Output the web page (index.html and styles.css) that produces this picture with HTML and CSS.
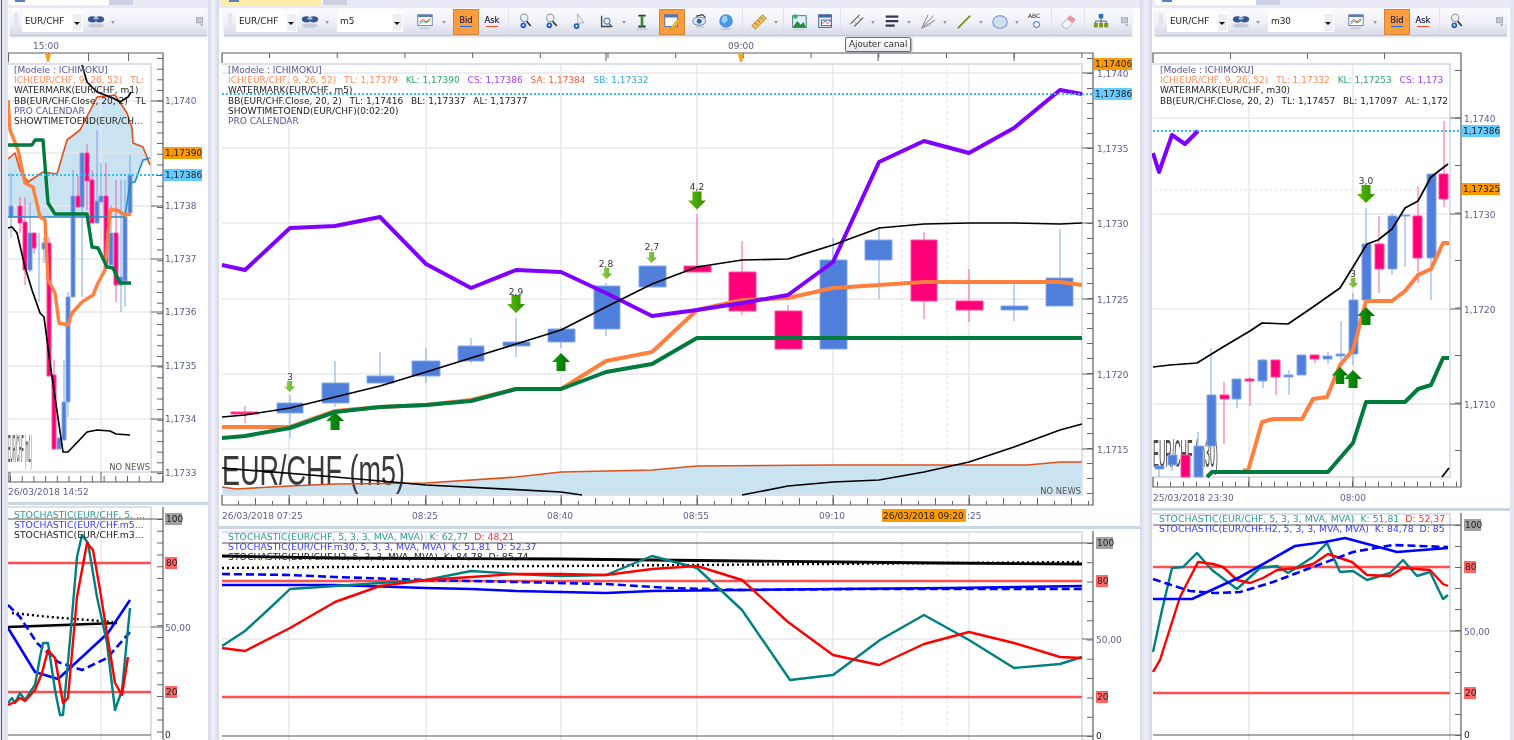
FILE: index.html
```html
<!DOCTYPE html>
<html lang="fr">
<head>
<meta charset="utf-8">
<title>EUR/CHF</title>
<link rel="stylesheet" href="styles.css">
</head>
<body>
<svg class="defs" width="0" height="0" aria-hidden="true">
  <defs>
    <linearGradient id="gUp" x1="0" x2="1"><stop offset="0" stop-color="#12a012"/><stop offset="1" stop-color="#006a00"/></linearGradient>
    <linearGradient id="gDown" x1="0" x2="1"><stop offset="0" stop-color="#5cc000"/><stop offset="1" stop-color="#2c8a00"/></linearGradient>
    <linearGradient id="gSm" x1="0" x2="1"><stop offset="0" stop-color="#a0d860"/><stop offset="1" stop-color="#5aa820"/></linearGradient>
    <symbol id="up" viewBox="0 0 18 18"><path d="M9 0L18 9H13.500V18H4.500V9H0Z" fill="url(#gUp)"/></symbol>
    <symbol id="down" viewBox="0 0 18 18"><path d="M9 18L18 9H13.500V0H4.500V9H0Z" fill="url(#gDown)"/></symbol>
    <symbol id="sdown" viewBox="0 0 11 11"><path d="M5.500 11L11 5.500H8V0H3V5.500H0Z" fill="url(#gSm)"/></symbol>
    <symbol id="i-glass" viewBox="0 0 20 18"><ellipse cx="6" cy="6" rx="5" ry="3.500" fill="#35568f"/><ellipse cx="14" cy="6" rx="5" ry="3.500" fill="#35568f"/><ellipse cx="10" cy="5" rx="3" ry="1.500" fill="#9ab4dc"/><ellipse cx="10" cy="13" rx="9" ry="2.500" fill="#c8ccd8"/></symbol>
    <symbol id="i-chart" viewBox="0 0 20 20"><rect x="2" y="2" width="16" height="12" fill="#fff" stroke="#5c7cb4"/><rect x="2" y="2" width="16" height="2.500" fill="#5c7cb4"/><path d="M4 10L8 7L11 10L16 6" fill="none" stroke="#d04040"/><path d="M4 12L8 9L11 11L16 8" fill="none" stroke="#30a040"/><path d="M4 17H16" stroke="#c8ccd8" stroke-width="2"/></symbol>
    <symbol id="i-mag" viewBox="0 0 20 22"><circle cx="9" cy="6" r="4.500" fill="#eef2fa" stroke="#9aa2b4" stroke-width="1.500"/><path d="M12 10L17 16" stroke="#333" stroke-width="2"/><circle cx="8" cy="15" r="3.500" fill="#2262c4"/><circle cx="8" cy="15" r="1.200" fill="#fff"/></symbol>
    <symbol id="i-cur" viewBox="0 0 20 22"><path d="M8 1L16 12H11L9 16Z" fill="#eef0f6" stroke="#9aa2b4"/><circle cx="7" cy="16" r="3.500" fill="#2262c4"/><circle cx="7" cy="16" r="1.200" fill="#fff"/></symbol>
    <symbol id="i-zoom" viewBox="0 0 20 20"><path d="M4 3V15H16" fill="none" stroke="#444" stroke-width="1.500"/><circle cx="10" cy="9" r="3.500" fill="#dde8f8" stroke="#405a90"/><path d="M12.500 12L15 15" stroke="#405a90" stroke-width="1.500"/></symbol>
    <symbol id="i-beam" viewBox="0 0 20 20"><path d="M6 3H14M6 15H14" stroke="#334" stroke-width="2"/><path d="M10 3V15" stroke="#3a8a30" stroke-width="3"/><path d="M4 18H16" stroke="#c8ccd8" stroke-width="2"/></symbol>
    <symbol id="i-note" viewBox="0 0 20 20"><rect x="2" y="2" width="14" height="13" fill="#fff" stroke="#4a6ab0"/><rect x="2" y="2" width="14" height="3" fill="#4a78c8"/><path d="M8 17L17 6L19 8L11 18Z" fill="#f8c020" stroke="#a06010" stroke-width=".5"/></symbol>
    <symbol id="i-eye" viewBox="0 0 20 22"><ellipse cx="9" cy="10" rx="8" ry="5" fill="#dfe8f6" stroke="#5a6a84"/><circle cx="9" cy="10" r="3" fill="#2a64b8"/><path d="M5 4L13 2L17 6" fill="none" stroke="#333" stroke-width="1.500"/><path d="M5 17H15" stroke="#c8ccd8" stroke-width="2"/></symbol>
    <symbol id="i-globe" viewBox="0 0 20 20"><circle cx="10" cy="9" r="7.500" fill="#4a96dc"/><path d="M6 4L11 3L12 8L8 12L5 9Z" fill="#9cd0f0"/><path d="M4 18H16" stroke="#c8ccd8" stroke-width="2"/></symbol>
    <symbol id="i-ruler" viewBox="0 0 20 20"><path d="M2 14L14 2L18 6L6 18Z" fill="#ecc060" stroke="#a88030"/><path d="M6 11L8 13M9 8L11 10M12 5L14 7" stroke="#806020"/></symbol>
    <symbol id="i-pic" viewBox="0 0 20 20"><rect x="3" y="3" width="15" height="13" fill="#dff0ff" stroke="#2a7a60"/><path d="M3 16L8 9L12 13L15 10L18 16Z" fill="#2a8a40"/><circle cx="6" cy="4" r="2.500" fill="#3cb050"/><path d="M4 18.500H16" stroke="#c8ccd8" stroke-width="1.500"/></symbol>
    <symbol id="i-win" viewBox="0 0 20 20"><rect x="3" y="2" width="14" height="14" fill="#e6eefa" stroke="#3a5a98"/><rect x="3" y="2" width="14" height="3" fill="#3a66b4"/><rect x="6" y="8" width="11" height="6" fill="#fff" stroke="#3a5a98"/><path d="M7 12L10 9L13 12L16 9" fill="none" stroke="#b04050"/></symbol>
    <symbol id="i-chan" viewBox="0 0 20 20"><path d="M4 12L14 2M8 15L18 5" stroke="#666" stroke-width="1.200"/><path d="M7 9L10 12M12 4L15 7" stroke="#999"/></symbol>
    <symbol id="i-lines" viewBox="0 0 20 20"><path d="M3 4H17" stroke="#33394a" stroke-width="2.500"/><path d="M3 9H17" stroke="#33394a" stroke-width="2.500"/><path d="M3 14H13" stroke="#33394a" stroke-width="2.500"/></symbol>
    <symbol id="i-fan" viewBox="0 0 20 20"><path d="M3 17L16 3M3 17L18 8M3 17L10 2" stroke="#777" fill="none"/><path d="M3 17L14 13" stroke="#bbb"/></symbol>
    <symbol id="i-line" viewBox="0 0 20 20"><path d="M3 17L17 3" stroke="#6a9a20" stroke-width="2"/></symbol>
    <symbol id="i-ell" viewBox="0 0 20 20"><ellipse cx="10" cy="10" rx="8" ry="7" fill="#cfe0f4" stroke="#90a8c8" stroke-width="1.500"/></symbol>
    <symbol id="i-erase" viewBox="0 0 20 20"><path d="M3 13L12 3L18 7L10 17H6Z" fill="#f4f4f6" stroke="#b0b0b8"/><path d="M12 3L18 7L15 11L9 7Z" fill="#f09098"/></symbol>
    <symbol id="i-org" viewBox="0 0 20 20"><rect x="7.500" y="1" width="5" height="5" fill="#2a70c0"/><path d="M10 6V9M4 11V9H16V11M10 9V11" stroke="#555" fill="none"/><rect x="2" y="11" width="4.500" height="5" fill="#7a9a20"/><rect x="7.800" y="11" width="4.500" height="5" fill="#7a9a20"/><rect x="13.500" y="11" width="4.500" height="5" fill="#7a9a20"/></symbol>
    <symbol id="i-more" viewBox="0 0 14 14"><rect x="3" y="2" width="7" height="6" fill="#c4c8d4" stroke="#a0a4b0"/><path d="M7 10L9 12L11 10Z" fill="#8a8e9a"/></symbol>
  </defs>
</svg>

<main class="desk">
  <div class="gutter gutter-first"></div>

  <!-- LEFT PANE -->
  <section class="pane pane-left">
    <div class="tabs"><span class="tab"></span><span class="tab tab-next"></span></div>
    <div class="toolbar">
      <span class="grip"></span>
      <span class="combo combo-pair">EUR/CHF<i class="drop"></i></span>
      <span class="tb"><svg class="ic"><use href="#i-glass"/></svg></span>
      <span class="ta"></span>
      <span class="spacer"></span>
      <span class="tb tb-more"><svg class="ic ic-s"><use href="#i-more"/></svg></span>
    </div>
    <div class="chart">
      <svg class="plot h-left-main" viewBox="8 36 200 466" width="200" height="466">
        <text class="ax" x="46" y="49" text-anchor="middle">15:00</text>
        <path class="cloud" d="M8 159L15 153L20 170L28 182L43 172L57 174L67 140L80 130L97 97L115 95L127 113L132 128L133 143L143 147L150 165L143 160L135 182L130 183L125 213V217H8Z"/>
        <path class="grid" d="M8 101H151M8 153H151M8 206H151M8 259H151M8 312H151M8 366H151M8 419H151M101 63V472"/>
        <path class="dot-grey" d="M80 153H151"/>
        <path class="plotbox" d="M8 64H151V472H8"/>
        <path class="wick-b" d="M11 173V238M39 233V302M44 237V263M30 202V272M68 292V417M64 360V440M82 153V297M97 130V213M101 163V202M111 205V265M121 180V312M125 180V307M130 155V213M73 170V297"/>
        <path class="wick-p" d="M20 197V233M25 197V285M34 233V254M49 237V376M54 360V449M78 176V207M87 144V210M92 170V223M106 163V263M116 180V302"/>
        <path class="body-b" d="M9 206h4v11h-4zM28 233h4v37h-4zM42 243h4v6h-4zM57 438h4v11h-4zM62 402h4v38h-4zM66 297h4v105h-4zM71 196h4v101h-4zM80 153h4v54h-4zM95 201h4v22h-4zM99 196h4v6h-4zM109 233h4v32h-4zM119 277h4v8h-4zM123 217h4v64h-4zM128 175h4v38h-4z"/>
        <path class="body-p" d="M18 206h4v17h-4zM23 222h4v48h-4zM32 233h4v15h-4zM47 243h4v133h-4zM52 375h4v74h-4zM76 196h4v11h-4zM85 153h4v28h-4zM90 180h4v43h-4zM104 196h4v67h-4zM114 233h4v52h-4z"/>
        <text class="mark mark-left" transform="translate(8 462) scale(.093 1)">EUR/CHF (m1)</text>
        <polyline class="l-red" points="8,159 15,153 20,170 28,182 43,172 57,174 67,140 80,130 97,97 115,95 127,113 132,128 133,143 143,147 150,165"/>
        <polyline class="l-skyline" points="8,217 125,217 130,183 135,182 143,160 150,158"/>
        <polyline class="l-orange l-thin" points="8,100 10,130 18,150 25,183 33,187 40,217 45,220 48,280 55,293 59,323 68,325 72,313 82,302 93,295 98,283 105,270 110,210 117,210 125,215 131,214"/>
        <polyline class="l-green l-thin" points="8,145 32,145 35,140 43,140 48,203 55,214 87,214 92,247 98,248 107,267 113,268 120,283 131,283"/>
        <polyline class="l-black" points="8,228 12,227 17,233 25,267 32,290 40,313 44,317 50,363 63,452 68,452 87,432 97,430 110,431 116,434 130,435"/>
        <polyline class="l-black" points="82,65 87,82 97,92 113,98 120,102 128,97 131,92"/>
        <path class="l-dots" d="M8 175H163"/>
        <text class="nonews" x="150" y="470" text-anchor="end">NO NEWS</text>
        <path class="frame" d="M8 63V53H163V482H8V472"/>
        <line class="tk" x1="8" y1="57" x2="163" y2="57" stroke-width="8" stroke-dasharray="1 39"/>
        <line class="tk" x1="10" y1="479" x2="163" y2="479" stroke-width="6" stroke-dasharray="1 10.700"/>
        <line class="tk" x1="160" y1="58" x2="160" y2="482" stroke-width="6" stroke-dasharray="1 9.640"/>
        <path class="frame-t" d="M151 101H163M151 206H163M151 259H163M151 312H163M151 366H163M151 419H163M151 472H163M101 472V482M10 472V482"/>
        <path class="arrow-mark" d="M45 54H51L49 62H47Z"/>
        <text class="ax" x="165" y="104">1,1740</text>
        <text class="ax" x="165" y="209">1,1738</text>
        <text class="ax" x="165" y="262">1,1737</text>
        <text class="ax" x="165" y="315">1,1736</text>
        <text class="ax" x="165" y="369">1,1735</text>
        <text class="ax" x="165" y="422">1,1734</text>
        <text class="ax" x="165" y="476">1,1733</text>
        <rect class="pb-o" x="164" y="147" width="38" height="12"/><text class="pbt" x="165" y="156">1,17390</text>
        <rect class="pb-b" x="164" y="169" width="38" height="12"/><text class="pbt" x="165" y="178">1,17386</text>
        <text class="ax" x="8" y="495">26/03/2018 14:52</text>
      </svg>
      <div class="legend legend-left">
        <div class="lg-m">[Modele : ICHIMOKU]</div>
        <div class="lg-i">ICH(EUR/CHF, 9, 26, 52) <span class="gap">TL:</span></div>
        <div>WATERMARK(EUR/CHF, m1)</div>
        <div>BB(EUR/CHF.Close, 20, 2) <span class="gap">TL</span></div>
        <div class="lg-m">PRO CALENDAR</div>
        <div>SHOWTIMETOEND(EUR/CH...</div>
      </div>
    </div>
    <div class="split"></div>
    <div class="chart">
      <svg class="plot" viewBox="8 505 200 235" width="200" height="235">
        <path class="grid" d="M8 627H151M101 507V740"/>
        <path class="plotbox" d="M8 507H151V740"/>
        <path class="h-dark" d="M8 519H151M8 735H151"/>
        <path class="h-red" d="M8 563H151M8 692H151"/>
        <polyline class="s-black" points="8,627 117,623"/>
        <polyline class="s-black-dot" points="12,613 50,617 113,622"/>
        <polyline class="s-blue" points="8,628 35,672 58,679 82,657 108,633 130,600"/>
        <polyline class="s-blue-dash" points="8,605 20,617 37,643 58,662 82,670 107,658 130,632"/>
        <polyline class="s-teal" points="8,703 12,698 15,703 20,693 25,700 35,685 40,657 43,643 48,643 55,690 60,715 63,715 70,640 77,557 82,535 88,543 97,597 107,643 115,710 122,690 130,608"/>
        <polyline class="s-red" points="8,705 15,702 20,698 25,701 35,690 42,673 48,650 55,658 63,703 68,698 77,597 87,543 93,550 100,590 115,683 122,695 128,657"/>
        <path class="frame" d="M163 507V740"/>
        <path class="frame-t" d="M151 519H163M151 627H163"/>
        <line class="tk" x1="160" y1="519" x2="160" y2="740" stroke-width="6" stroke-dasharray="1 10.800"/>
        <rect class="pb-g" x="165" y="513" width="17" height="12"/><text class="pbt" x="166" y="522">100</text>
        <rect class="pb-r" x="165" y="557" width="12" height="12"/><text class="pbt" x="166" y="566">80</text>
        <text class="ax" x="165" y="631">50,00</text>
        <rect class="pb-r" x="165" y="686" width="12" height="12"/><text class="pbt" x="166" y="695">20</text>
        <text class="pbt" x="165" y="738">0</text>
      </svg>
      <div class="legend legend-stoch legend-sl">
        <div class="lg-t">STOCHASTIC(EUR/CHF, 5, ...</div>
        <div class="lg-bl">STOCHASTIC(EUR/CHF.m5...</div>
        <div>STOCHASTIC(EUR/CHF.m3...</div>
      </div>
    </div>
  </section>

  <div class="gutter gutter-a"></div>

  <!-- MIDDLE PANE -->
  <section class="pane pane-mid">
    <div class="tabs tabs-mid"><span class="tab tab-on"></span><span class="tab tab-next"></span></div>
    <div class="toolbar">
      <span class="grip"></span>
      <span class="combo combo-pair">EUR/CHF<i class="drop"></i></span>
      <span class="tb"><svg class="ic"><use href="#i-glass"/></svg></span>
      <span class="ta"></span>
      <span class="combo combo-tf">m5<i class="drop"></i></span>
      <span class="tb tb-w tb-chart"><svg class="ic"><use href="#i-chart"/></svg></span>
      <span class="ta"></span>
      <span class="pick pick-on"><b>Bid</b></span>
      <span class="pick pick-ask"><b>Ask</b></span>
      <span class="sep sep-w"></span>
      <span class="tb"><svg class="ic"><use href="#i-mag"/></svg></span>
      <span class="tb"><svg class="ic"><use href="#i-mag"/></svg></span>
      <span class="tb tb-w"><svg class="ic"><use href="#i-cur"/></svg></span>
      <span class="tb"><svg class="ic"><use href="#i-zoom"/></svg></span>
      <span class="ta"></span>
      <span class="tb"><svg class="ic"><use href="#i-beam"/></svg></span>
      <span class="tb tb-on"><svg class="ic"><use href="#i-note"/></svg></span>
      <span class="tb tb-shift"><svg class="ic"><use href="#i-eye"/></svg></span>
      <span class="tb"><svg class="ic"><use href="#i-globe"/></svg></span>
      <span class="sep sep-w"></span>
      <span class="tb"><svg class="ic"><use href="#i-ruler"/></svg></span>
      <span class="ta"></span>
      <span class="sep"></span>
      <span class="tb"><svg class="ic"><use href="#i-pic"/></svg></span>
      <span class="tb"><svg class="ic"><use href="#i-win"/></svg></span>
      <span class="sep"></span>
      <span class="tb tb-tip"><svg class="ic"><use href="#i-chan"/></svg><span class="tip">Ajouter canal</span></span>
      <span class="ta"></span>
      <span class="tb tb-x"><svg class="ic"><use href="#i-lines"/></svg></span>
      <span class="ta"></span>
      <span class="tb tb-x"><svg class="ic"><use href="#i-fan"/></svg></span>
      <span class="ta"></span>
      <span class="tb tb-x"><svg class="ic"><use href="#i-line"/></svg></span>
      <span class="ta"></span>
      <span class="tb tb-x"><svg class="ic"><use href="#i-ell"/></svg></span>
      <span class="ta"></span>
      <span class="tb tb-abc"><em>ABC</em><i class="abc-dot"></i></span>
      <span class="sep sep-w"></span>
      <span class="tb"><svg class="ic"><use href="#i-erase"/></svg></span>
      <span class="sep sep-w"></span>
      <span class="tb"><svg class="ic"><use href="#i-org"/></svg></span>
      <span class="spacer"></span>
      <span class="tb tb-more"><svg class="ic ic-s"><use href="#i-more"/></svg></span>
    </div>
    <div class="chart">
      <svg class="plot" viewBox="219 36 921 490" width="921" height="490">
        <text class="ax" x="741" y="49" text-anchor="middle">09:00</text>
        <path class="grid" d="M222 73H1082M222 148H1082M222 223H1082M222 299H1082M222 374H1082M222 449H1082M289 63V495M426 63V495M561 63V495M697 63V495M833 63V495M969 63V495"/>
        <path class="grid-dash" d="M902 63V495M947 63V495"/>
        <path class="cloud" d="M222 487L236 489L290 486L335 484L426 483L516 477L561 472L652 470L697 466L833 465L1027 465L1060 462L1082 462V495H222Z"/>
        <path class="plotbox" d="M222 64H1082V495H222"/>
        <text class="mark" transform="translate(222 485) scale(.643 1)">EUR/CHF (m5)</text>
        <path class="wick-b" d="M290 395V438M335 361V407M380 352V376M426 348V383M471 338V363M516 318V357M561 327V348M606 283V336M833 238V260M879 227V299M1014 283V321M1060 229V278"/>
        <path class="wick-p" d="M245 406V423M697 214V266M742 241V315M788 305V350M924 232V319M969 269V322"/>
        <path class="body-b" d="M277 403h26v10h-26zM322 383h27v20h-27zM367 376h27v7h-27zM412 361h28v15h-28zM458 346h26v15h-26zM503 342h27v4h-27zM548 329h27v13h-27zM594 286h26v43h-26zM639 266h27v21h-27zM820 260h27v89h-27zM865 240h27v20h-27zM1001 306h27v4h-27zM1046 278h27v28h-27z"/>
        <path class="body-p" d="M231 412h27v2h-27zM684 266h27v6h-27zM729 272h27v39h-27zM775 311h27v38h-27zM911 240h26v61h-26zM956 301h27v9h-27z"/>
        <polyline class="l-red" points="222,487 236,489 290,486 335,484 426,483 516,477 561,472 652,470 697,466 833,465 1027,465 1060,462 1082,462"/>
        <polyline class="l-orange" points="222,427 290,427 335,411 380,407 426,405 471,400 516,389 561,389 606,361 652,352 697,310 742,300 788,298 833,288 879,285 924,282 969,282 1014,282 1060,282 1082,285"/>
        <polyline class="l-green" points="222,438 245,436 290,428 335,412 380,407 426,405 471,401 516,389 561,389 606,372 652,364 697,338 1082,338"/>
        <polyline class="l-purple" points="222,265 245,270 290,228 335,226 380,217 426,264 471,288 516,270 561,272 606,293 652,316 697,310 742,303 788,295 833,262 879,162 924,141 969,153 1014,128 1060,90 1082,94"/>
        <polyline class="l-black" points="222,417 245,415 290,408 335,397 380,386 426,372 471,358 516,344 561,330 606,307 652,284 697,267 742,260 788,259 833,245 879,228 924,224 969,223 1014,223 1060,224 1082,223"/>
        <polyline class="l-black" points="222,468 335,477 426,485 561,492 582,495"/>
        <polyline class="l-black" points="742,495 788,486 833,482 879,480 924,472 969,462 1014,447 1060,430 1082,424"/>
        <path class="l-dots" d="M222 94H1093"/>
        <use href="#up" x="326" y="412" width="18" height="18"/>
        <use href="#up" x="552" y="353" width="18" height="18"/>
        <use href="#down" x="507" y="295" width="18" height="18"/>
        <use href="#down" x="688" y="191" width="18" height="19"/>
        <use href="#sdown" x="284" y="381" width="11" height="11"/>
        <use href="#sdown" x="601" y="268" width="11" height="11"/>
        <use href="#sdown" x="646" y="252" width="11" height="11"/>
        <text class="val" x="290" y="380">3</text>
        <text class="val" x="516" y="295">2,9</text>
        <text class="val" x="606" y="267">2,8</text>
        <text class="val" x="652" y="250">2,7</text>
        <text class="val" x="697" y="190">4,2</text>
        <text class="nonews" x="1081" y="494" text-anchor="end">NO NEWS</text>
        <path class="frame" d="M222 63V53H1093V505H222V495"/>
        <line class="tk" x1="269" y1="55.500" x2="1093" y2="55.500" stroke-width="5" stroke-dasharray="1 66.700"/>
        <line class="tk" x1="238" y1="503" x2="1093" y2="503" stroke-width="4" stroke-dasharray="1 16"/>
        <line class="tk" x1="255" y1="501.500" x2="1093" y2="501.500" stroke-width="7" stroke-dasharray="1 33"/>
        <line class="tk" x1="1090" y1="58" x2="1090" y2="505" stroke-width="6" stroke-dasharray="1 14"/>
        <path class="frame-t" d="M1082 73H1093M1082 148H1093M1082 223H1093M1082 299H1093M1082 374H1093M1082 449H1093M289 495V505M426 495V505M561 495V505M697 495V505M833 495V505M969 495V505M606 53V61M878 53V61M1014 53V61"/>
        <path class="arrow-mark" d="M738 54H744L742 62H740Z"/>
        <text class="ax" x="1097" y="77">1,1740</text>
        <text class="ax" x="1097" y="152">1,1735</text>
        <text class="ax" x="1097" y="227">1,1730</text>
        <text class="ax" x="1097" y="303">1,1725</text>
        <text class="ax" x="1097" y="378">1,1720</text>
        <text class="ax" x="1097" y="453">1,1715</text>
        <rect class="pb-o" x="1094" y="58" width="38" height="12"/><text class="pbt" x="1095" y="67">1,17406</text>
        <rect class="pb-b" x="1094" y="88" width="38" height="12"/><text class="pbt" x="1095" y="97">1,17386</text>
        <text class="ax" x="222" y="519">26/03/2018 07:25</text>
        <text class="ax" x="425" y="519" text-anchor="middle">08:25</text>
        <text class="ax" x="560" y="519" text-anchor="middle">08:40</text>
        <text class="ax" x="696" y="519" text-anchor="middle">08:55</text>
        <text class="ax" x="832" y="519" text-anchor="middle">09:10</text>
        <rect class="pb-o" x="882" y="509" width="84" height="13"/><text class="pbt" x="883" y="519">26/03/2018 09:20</text>
        <text class="ax" x="967" y="519">:25</text>
      </svg>
      <div class="legend legend-mid">
        <div class="lg-m">[Modele : ICHIMOKU]</div>
        <div class="lg-i">ICH(EUR/CHF, 9, 26, 52) <span class="gap">TL: 1,17379</span> <span class="gap lg-k">KL: 1,17390</span> <span class="gap lg-c">CS: 1,17386</span> <span class="gap lg-s">SA: 1,17384</span> <span class="gap lg-sb">SB: 1,17332</span></div>
        <div>WATERMARK(EUR/CHF, m5)</div>
        <div>BB(EUR/CHF.Close, 20, 2) <span class="gap">TL: 1,17416</span> <span class="gap">BL: 1,17337</span> <span class="gap">AL: 1,17377</span></div>
        <div>SHOWTIMETOEND(EUR/CHF)(0:02:20)</div>
        <div class="lg-m">PRO CALENDAR</div>
      </div>
    </div>
    <div class="split"></div>
    <div class="chart">
      <svg class="plot" viewBox="219 529 921 211" width="921" height="211">
        <path class="grid" d="M222 639H1082M289 531V740M426 531V740M561 531V740M697 531V740M833 531V740M969 531V740"/>
        <path class="grid-dash" d="M902 531V740M947 531V740"/>
        <path class="plotbox" d="M222 532H1082V740"/>
        <path class="h-dark" d="M222 543H1082M222 736H1082"/>
        <path class="h-red" d="M222 581H1082M222 697H1082"/>
        <polyline class="s-black s-thick" points="222,556 335,558 561,559 742,561 940,563 1082,564"/>
        <polyline class="s-black-dot" points="222,568 335,567 561,566 1082,562"/>
        <polyline class="s-blue-dash" points="222,574 290,575 335,577 426,580 516,582 606,584 670,588 742,590 860,589 1082,589"/>
        <polyline class="s-blue" points="222,585 335,585 426,588 471,589 516,591 561,592 606,593 652,591 742,590 833,589 950,588 1082,586"/>
        <polyline class="s-teal" points="222,646 245,631 270,608 290,589 335,586 380,583 426,580 471,571 516,574 561,576 606,575 652,556 697,568 742,610 790,680 833,675 880,640 924,615 969,640 1014,668 1060,664 1082,657"/>
        <polyline class="s-red" points="222,648 245,651 290,628 335,602 380,586 426,580 471,577 516,574 561,574 606,575 652,569 697,566 742,580 788,622 833,655 879,665 924,644 969,632 1014,643 1060,657 1082,658"/>
        <path class="frame" d="M1093 531V740"/>
        <path class="frame-t" d="M1082 543H1093M1082 639H1093M1082 736H1093"/>
        <line class="tk" x1="1090" y1="543" x2="1090" y2="740" stroke-width="6" stroke-dasharray="1 18.300"/>
        <rect class="pb-g" x="1096" y="537" width="17" height="12"/><text class="pbt" x="1097" y="546">100</text>
        <rect class="pb-r" x="1096" y="575" width="12" height="12"/><text class="pbt" x="1097" y="584">80</text>
        <text class="ax" x="1096" y="643">50,00</text>
        <rect class="pb-r" x="1096" y="691" width="12" height="12"/><text class="pbt" x="1097" y="700">20</text>
        <text class="pbt" x="1096" y="739">0</text>
      </svg>
      <div class="legend legend-stoch legend-sm">
        <div class="lg-t">STOCHASTIC(EUR/CHF, 5, 3, 3, MVA, MVA) <span class="gap">K: 62,77</span> <span class="gap lg-r">D: 48,21</span></div>
        <div class="lg-bl">STOCHASTIC(EUR/CHF.m30, 5, 3, 3, MVA, MVA) <span class="gap">K: 51,81</span> <span class="gap">D: 52,37</span></div>
        <div>STOCHASTIC(EUR/CHF.H2, 5, 3, 3, MVA, MVA) <span class="gap">K: 84,78</span> <span class="gap">D: 85,74</span></div>
      </div>
    </div>
  </section>

  <div class="gutter gutter-b"></div>

  <!-- RIGHT PANE -->
  <section class="pane pane-right">
    <div class="tabs tabs-right"><span class="tab"></span><span class="tab tab-next"></span></div>
    <div class="toolbar">
      <span class="grip"></span>
      <span class="combo combo-pair">EUR/CHF<i class="drop"></i></span>
      <span class="tb"><svg class="ic"><use href="#i-glass"/></svg></span>
      <span class="ta"></span>
      <span class="combo combo-tf">m30<i class="drop"></i></span>
      <span class="tb tb-w tb-chart"><svg class="ic"><use href="#i-chart"/></svg></span>
      <span class="ta"></span>
      <span class="pick pick-on"><b>Bid</b></span>
      <span class="pick pick-ask"><b>Ask</b></span>
      <span class="sep sep-w"></span>
      <span class="tb"><svg class="ic"><use href="#i-mag"/></svg></span>
      <span class="spacer"></span>
      <span class="tb tb-more"><svg class="ic ic-s"><use href="#i-more"/></svg></span>
    </div>
    <div class="chart">
      <svg class="plot" viewBox="1152 36 358 472" width="358" height="472">
        <path class="grid" d="M1153 118H1450M1153 214H1450M1153 309H1450M1153 404H1450M1249 63V477M1353 63V477"/>
        <path class="plotbox" d="M1153 64H1450V477H1153"/>
        <path class="dot-grey" d="M1155 190H1450"/>
        <text class="mark mark-right" transform="translate(1153 467) scale(.233 1)">EUR/CHF (m30)</text>
        <path class="wick-b" d="M1159 466V477M1172 465V471M1198 432V446M1211 348V395M1237 399V408M1263 359V388M1289 370V395M1328 352V364M1341 321V361M1353 293V365M1366 208V300M1392 213V275M1405 215V267M1431 258V300"/>
        <path class="wick-p" d="M1224 382V444M1250 377V406M1276 377V395M1315 359V363M1379 216V293M1418 186V283M1444 121V207"/>
        <path class="body-b" d="M1155 466h9v3h-9zM1168 455h9v10h-9zM1194 446h9v31h-9zM1207 395h9v51h-9zM1232 379h9v20h-9zM1258 360h9v21h-9zM1284 375h9v2h-9zM1297 355h9v20h-9zM1323 356h9v3h-9zM1336 354h9v2h-9zM1349 300h9v54h-9zM1362 244h9v56h-9zM1388 216h9v53h-9zM1401 215h9v1h-9zM1427 174h9v84h-9z"/>
        <path class="body-p" d="M1181 455h9v22h-9zM1220 395h9v4h-9zM1245 379h9v2h-9zM1271 360h9v17h-9zM1310 355h9v4h-9zM1375 244h9v25h-9zM1413 216h9v42h-9zM1439 174h9v25h-9z"/>
        <polyline class="l-purple" points="1153,153 1159,172 1172,135 1185,144 1198,131"/>
        <polyline class="l-orange" points="1243,470 1248,471 1262,422 1273,419 1302,419 1313,399 1327,397 1340,365 1353,350 1366,301 1392,301 1405,291 1418,275 1431,269 1443,243 1449,243"/>
        <polyline class="l-green" points="1207,477 1212,472 1328,472 1353,443 1366,402 1405,402 1418,389 1431,385 1443,358 1449,358"/>
        <polyline class="l-black" points="1153,367 1170,365 1197,363 1223,347 1250,331 1262,323 1288,324 1313,307 1340,288 1353,267 1367,244 1378,240 1392,229 1405,208 1418,201 1431,177 1448,164"/>
        <polyline class="l-black" points="1442,477 1449,468"/>
        <path class="l-dots" d="M1153 131H1461"/>
        <use href="#down" x="1357" y="185" width="18" height="18"/>
        <use href="#sdown" x="1348" y="278" width="10" height="10"/>
        <use href="#up" x="1331" y="367" width="18" height="17"/>
        <use href="#up" x="1344" y="370" width="18" height="18"/>
        <use href="#up" x="1357" y="307" width="18" height="18"/>
        <text class="val" x="1366" y="184">3,0</text>
        <text class="val" x="1353" y="277">3</text>
        <path class="frame" d="M1153 63V53H1461V487H1153V477"/>
        <line class="tk" x1="1230" y1="56" x2="1461" y2="56" stroke-width="6" stroke-dasharray="1 76"/>
        <line class="tk" x1="1157" y1="484" x2="1461" y2="484" stroke-width="5" stroke-dasharray="1 12"/>
        <line class="tk" x1="1458" y1="70" x2="1458" y2="487" stroke-width="6" stroke-dasharray="1 46.500"/>
        <path class="frame-t" d="M1450 118H1461M1450 214H1461M1450 309H1461M1450 404H1461M1249 477V487M1353 477V487"/>
        <text class="ax" x="1464" y="122">1,1740</text>
        <text class="ax" x="1464" y="218">1,1730</text>
        <text class="ax" x="1464" y="313">1,1720</text>
        <text class="ax" x="1464" y="408">1,1710</text>
        <rect class="pb-b" x="1462" y="125" width="38" height="12"/><text class="pbt" x="1463" y="134">1,17386</text>
        <rect class="pb-o" x="1462" y="183" width="38" height="12"/><text class="pbt" x="1463" y="192">1,17325</text>
        <text class="ax" x="1153" y="501">25/03/2018 23:30</text>
        <text class="ax" x="1353" y="501" text-anchor="middle">08:00</text>
      </svg>
      <div class="legend legend-right">
        <div class="lg-m">[Modele : ICHIMOKU]</div>
        <div class="lg-i">ICH(EUR/CHF, 9, 26, 52) <span class="gap">TL: 1,17332</span> <span class="gap lg-k">KL: 1,17253</span> <span class="gap lg-c">CS: 1,173</span></div>
        <div>WATERMARK(EUR/CHF, m30)</div>
        <div>BB(EUR/CHF.Close, 20, 2) <span class="gap">TL: 1,17457</span> <span class="gap">BL: 1,17097</span> <span class="gap">AL: 1,172</span></div>
      </div>
    </div>
    <div class="split"></div>
    <div class="chart">
      <svg class="plot" viewBox="1152 511 358 229" width="358" height="229">
        <path class="grid" d="M1153 631H1450M1249 513V740M1353 513V740"/>
        <path class="plotbox" d="M1153 514H1450V740"/>
        <path class="h-dark" d="M1153 525H1450M1153 735H1450"/>
        <path class="h-red" d="M1153 567H1450M1153 693H1450"/>
        <polyline class="s-teal" points="1153,652 1162,610 1172,568 1183,567 1197,553 1212,570 1237,589 1260,568 1277,566 1288,573 1313,557 1327,543 1340,572 1353,571 1367,580 1390,573 1403,560 1417,576 1430,572 1443,599 1448,595"/>
        <polyline class="s-red" points="1153,672 1160,660 1180,597 1198,562 1213,564 1223,567 1237,580 1250,583 1263,578 1277,570 1297,568 1313,564 1328,554 1352,562 1367,575 1390,576 1403,568 1430,570 1443,584 1448,586"/>
        <polyline class="s-blue-dash" points="1153,579 1190,591 1215,593 1240,592 1273,582 1313,567 1353,552 1393,545 1448,547"/>
        <polyline class="s-blue" points="1153,599 1192,599 1240,577 1295,546 1325,542 1345,538 1397,552 1448,548"/>
        <path class="frame" d="M1461 513V740"/>
        <path class="frame-t" d="M1450 525H1461M1450 631H1461M1450 735H1461"/>
        <line class="tk" x1="1458" y1="525" x2="1458" y2="740" stroke-width="6" stroke-dasharray="1 20"/>
        <rect class="pb-g" x="1464" y="519" width="17" height="12"/><text class="pbt" x="1465" y="528">100</text>
        <rect class="pb-r" x="1464" y="561" width="12" height="12"/><text class="pbt" x="1465" y="570">80</text>
        <text class="ax" x="1464" y="635">50,00</text>
        <rect class="pb-r" x="1464" y="687" width="12" height="12"/><text class="pbt" x="1465" y="696">20</text>
        <text class="pbt" x="1464" y="738">0</text>
      </svg>
      <div class="legend legend-stoch legend-sr">
        <div class="lg-t">STOCHASTIC(EUR/CHF, 5, 3, 3, MVA, MVA) <span class="gap">K: 51,81</span> <span class="gap lg-r">D: 52,37</span></div>
        <div class="lg-bl">STOCHASTIC(EUR/CHF.H2, 5, 3, 3, MVA, MVA) <span class="gap">K: 84,78</span> <span class="gap">D: 85</span></div>
      </div>
    </div>
  </section>

  <div class="gutter gutter-last"></div>
</main>
</body>
</html>
```

FILE: styles.css
```css
html, body { margin: 0; padding: 0; background: #e3e5f1; }
.defs { position: absolute; }

.desk {
  display: flex;
  width: 1514px;
  height: 740px;
  overflow: hidden;
  font-family: "DejaVu Sans", sans-serif;
  font-size: 9px;
  color: #222;
  filter: blur(0.3px);
}

/* gutters between the panes */
.gutter { flex: none; background: linear-gradient(90deg, #d6d8e8, #eff0f8 50%, #d6d8e8); }
.gutter-first { width: 8px; background: linear-gradient(90deg, #e8e9f3 1px, #55586a 1px, #55586a 2px, #e3e5f1 2px); }
.gutter-a { width: 11px; }
.gutter-b { width: 12px; }
.gutter-last { width: 4px; background: #e3e5f1; }

/* panes */
.pane { flex: none; display: flex; flex-direction: column; height: 740px; background: #fff; }
.pane-left { width: 200px; }
.pane-mid { width: 921px; }
.pane-right { width: 358px; }

.tabs { flex: none; display: flex; height: 8px; background: #e9eaf6; align-items: flex-start; }
.tabs-mid { padding-left: 3px; }
.tabs-right { padding-left: 3px; }
.tab { position: relative; width: 100px; height: 5px; background: #fff; }
.tab::before { content: ""; position: absolute; left: 7px; top: 0; width: 10px; height: 1.500px; background: #5a7ec0; }
.tab-on { background: #ffeeaa; }
.tab-next { width: 24px; background: #cdd0e2; border-left: 1px solid #fff; }
.tab-next::before { display: none; }

/* toolbar */
.toolbar {
  flex: none;
  display: flex;
  align-items: center;
  height: 28px;
  margin: 0 1px 0 2px;
  background: linear-gradient(#fbfbfe, #eff0f7 55%, #d6d9e6);
  border-bottom: 1px solid #c2c6d6;
  box-sizing: border-box;
  box-shadow: 0 1px 2px #d4d6e2;
}
.pane-mid .toolbar { margin: 0 8px 0 5px; }
.pane-right .toolbar { margin: 0 3px 0 3px; }

.grip { flex: none; width: 4px; height: 18px; margin: 0 4px 0 4px; background: #e3e5ee; }
.combo {
  flex: none;
  position: relative;
  display: block;
  box-sizing: border-box;
  height: 21px;
  line-height: 21px;
  padding-left: 3px;
  background: #fff;
  font-size: 8.900px;
  color: #222;
}
.combo-pair { width: 61px; }
.combo-tf { width: 66px; margin-left: 5px; }
.drop { position: absolute; right: 1px; top: 3px; width: 9px; height: 17px; background: #eceef4; }
.drop::after { content: ""; position: absolute; left: 1px; top: 8px; border: 3.500px solid transparent; border-top: 3.500px solid #111; border-bottom: 0; }

.tb { flex: none; position: relative; display: flex; align-items: center; justify-content: center; width: 26px; height: 26px; }
.tb-w { width: 30px; }
.tb-x { width: 27px; }
.tb-chart { margin-left: 7px; }
.tb-shift { margin-left: 2px; }
.tb-on { height: 26px; margin-left: 4px; background: #ff9c3d; box-shadow: inset 0 0 0 1px #c8873f; }
.tb-more { width: 14px; }
.ic { width: 18px; height: 18px; display: block; }
.ic-s { width: 12px; height: 12px; }
.ta { flex: none; position: relative; width: 9px; height: 26px; }
.ta::after { content: ""; position: absolute; left: 2px; top: 12px; border: 2.500px solid transparent; border-top: 3px solid #9a9eaa; border-bottom: 0; }
.sep { flex: none; width: 1px; height: 26px; margin: 0 2px; background: #dfe1ea; }
.sep-w { margin: 0 3px; }
.spacer { flex: 1; }

.pick { flex: none; display: block; box-sizing: border-box; width: 26px; height: 26px; text-align: center; line-height: 22px; font-size: 8.400px; position: relative; }
.pick b { font-weight: normal; color: #23234a; -webkit-text-stroke: .2px #23234a; }
.pick::after { content: ""; position: absolute; left: 7px; right: 7px; top: 17px; height: 1.500px; background: #1e6fe0; }
.pick-on { margin-left: 4px; background: #ff9c3d; box-shadow: inset 0 0 0 1px #c8873f; }
.pick-ask::after { background: #e85030; }

.tb-abc em { font-style: normal; font-size: 6px; color: #223; position: absolute; top: 3px; left: 6px; }
.abc-dot { position: absolute; left: 11px; top: 12px; width: 5px; height: 5px; border-radius: 50%; background: #fff; border: 1.500px solid #2262c4; }

.tip {
  position: absolute;
  left: 2px;
  top: 28px;
  z-index: 3;
  padding: 0 3px;
  height: 13px;
  line-height: 13px;
  white-space: nowrap;
  font-size: 8.800px;
  color: #333;
  background: linear-gradient(#fff, #e8e9ee);
  border: 1px solid #6c6c6c;
  border-radius: 2px;
  box-shadow: 1px 1px 2px #999;
}

/* chart panels */
.chart { flex: none; position: relative; }
.plot { display: block; overflow: hidden; }
.split { flex: none; height: 3px; background: #cbd6e5; }

.legend {
  position: absolute;
  line-height: 10.200px;
  white-space: nowrap;
  overflow: hidden;
}
.legend-stoch { font-size: 9.300px; }
.legend-stoch .gap { margin-left: 3px; }
.legend-left { left: 6px; top: 29px; width: 136px; }
.legend-mid { left: 9px; top: 29px; width: 860px; }
.legend-right { left: 8px; top: 29px; width: 289px; }
.legend-sl { left: 6px; top: 5px; width: 136px; }
.legend-sm { left: 9px; top: 3px; width: 860px; }
.legend-sr { left: 7px; top: 3px; width: 290px; }

.gap { margin-left: 5px; }
.lg-m { color: #55558f; }
.lg-i { color: #ff8e5e; }
.lg-k { color: #2fa86e; }
.lg-c { color: #a340ff; }
.lg-s { color: #f0643a; }
.lg-sb { color: #3aa6e0; }
.lg-t { color: #2a9d95; }
.lg-bl { color: #3a3aff; }
.lg-r { color: #ff3030; }

/* chart ink */
.grid { stroke: #e7e8ee; stroke-width: 1.500; fill: none; }
.grid-dash { stroke: #dedfe6; stroke-width: 1; stroke-dasharray: 3 3; fill: none; }
.dot-grey { stroke: #d8d8d8; stroke-width: 1; stroke-dasharray: 2 3; fill: none; }
.plotbox { stroke: #dbe0ea; stroke-width: 2; fill: none; }
.cloud { fill: #c9e3f1; stroke: none; }
.frame { stroke: #5c5c5c; stroke-width: 1.200; fill: none; }
.frame-t { stroke: #5c5c5c; stroke-width: 1; fill: none; }
.tk { stroke: #666; }
.arrow-mark { fill: #ffa020; }

.wick-b { stroke: #7fa4e6; stroke-width: 1; fill: none; }
.wick-p { stroke: #ff5aa6; stroke-width: 1; fill: none; }
.body-b { fill: #4f7fdb; stroke: #86a8e8; stroke-width: 1; }
.body-p { fill: #ff0078; stroke: #ff4a9e; stroke-width: 1; }

polyline { fill: none; stroke-linejoin: round; }
.l-red { stroke: #e0501a; stroke-width: 1.600; }
.l-skyline { stroke: #1f8bc4; stroke-width: 1.600; }
.l-orange { stroke: #ff7f3f; stroke-width: 4; }
.l-green { stroke: #007a3d; stroke-width: 4; }
.l-thin { stroke-width: 3.400; }
.l-purple { stroke: #8000ff; stroke-width: 4; }
.l-black { stroke: #000; stroke-width: 1.700; }
.l-dots { stroke: #33bbff; stroke-width: 2; stroke-dasharray: 2 2; fill: none; }

.h-dark { stroke: #555; stroke-width: 1.200; fill: none; }
.h-red { stroke: #ff5050; stroke-width: 2.400; fill: none; }
.s-teal { stroke: #008080; stroke-width: 2.400; }
.s-red { stroke: #ff0000; stroke-width: 2.400; }
.s-blue { stroke: #0000ff; stroke-width: 2.600; }
.s-blue-dash { stroke: #0000ff; stroke-width: 2.600; stroke-dasharray: 8 4; }
.s-black { stroke: #000; stroke-width: 2.400; }
.s-thick { stroke-width: 2.800; }
.s-black-dot { stroke: #000; stroke-width: 2.400; stroke-dasharray: 2 3; }

/* chart text */
.ax, .pbt, .val, .nonews { font-family: "DejaVu Sans", sans-serif; font-size: 9px; }
.ax { fill: #5d5d8f; }
.pbt { fill: #222; }
.val { fill: #333; text-anchor: middle; }
.nonews { fill: #555; font-size: 8.400px; }
.mark { font-family: "Liberation Sans", sans-serif; font-size: 42px; fill: #3a3a3a; }
.mark-left { font-size: 38px; fill: #555; }
.mark-right { font-size: 38px; fill: #4a4a4a; }
.pb-o { fill: #ff9900; }
.pb-b { fill: #66ccff; }
.pb-g { fill: #a0a0a0; }
.pb-r { fill: #ff6666; }
```
